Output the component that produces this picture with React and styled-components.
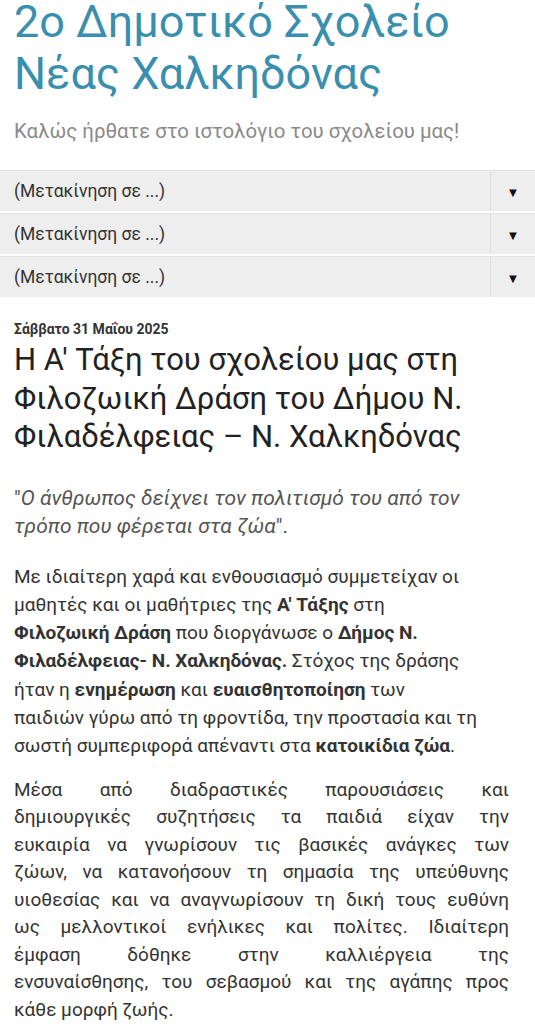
import styled, { createGlobalStyle } from "styled-components"

const GlobalStyle = createGlobalStyle`
    html, body {
        margin: 0;
        padding: 0;
        background: #ffffff;
    }
    body {
        font-family: "Roboto", "Noto Sans", "Liberation Sans", sans-serif;
        overflow: hidden;
    }
`;

const menus = ["(Μετακίνηση σε ...)", "(Μετακίνηση σε ...)", "(Μετακίνηση σε ...)"]

// lines kept as in the original post so the wrapping follows it
const intro = [
    <>Με ιδιαίτερη χαρά και ενθουσιασμό συμμετείχαν οι</>,
    <>μαθητές και οι μαθήτριες της <b>Α' Τάξης</b> στη</>,
    <><b>Φιλοζωική Δράση</b> που διοργάνωσε ο <b>Δήμος Ν.</b></>,
    <><b>Φιλαδέλφειας- Ν. Χαλκηδόνας.</b> Στόχος της δράσης</>,
    <>ήταν η <b>ενημέρωση</b> και <b>ευαισθητοποίηση</b> των</>,
    <>παιδιών γύρω από τη φροντίδα, την προστασία και τη</>,
    <>σωστή συμπεριφορά απέναντι στα <b>κατοικίδια ζώα</b>.</>,
]

const body = [
    "Μέσα από διαδραστικές παρουσιάσεις και",
    "δημιουργικές συζητήσεις τα παιδιά είχαν την",
    "ευκαιρία να γνωρίσουν τις βασικές ανάγκες των",
    "ζώων, να κατανοήσουν τη σημασία της υπεύθυνης",
    "υιοθεσίας και να αναγνωρίσουν τη δική τους ευθύνη",
    "ως μελλοντικοί ενήλικες και πολίτες. Ιδιαίτερη",
    "έμφαση δόθηκε στην καλλιέργεια της",
    "ενσυναίσθησης, του σεβασμού και της αγάπης προς",
    "κάθε μορφή ζωής.",
]

export default function App() {
    return (
        <Page>
            <GlobalStyle/>
            <Header>
                <BlogTitle>2o Δημοτικό Σχολείο Νέας Χαλκηδόνας</BlogTitle>
                <Tagline>Καλώς ήρθατε στο ιστολόγιο του σχολείου μας!</Tagline>
            </Header>

            <Menus>
                {menus.map((m, i) => (
                    <Select key={i}>
                        <SelectLabel>{m}</SelectLabel>
                        <SelectArrow>▼</SelectArrow>
                    </Select>
                ))}
            </Menus>

            <Post>
                <PostDate>Σάββατο 31 Μαΐου 2025</PostDate>
                <PostTitle>Η Α' Τάξη του σχολείου μας στη Φιλοζωική Δράση του Δήμου Ν. Φιλαδέλφειας – Ν. Χαλκηδόνας</PostTitle>

                <Quote>"<i>Ο άνθρωπος δείχνει τον πολιτισμό του από τον τρόπο που φέρεται στα ζώα</i>".</Quote>

                <Para $gap={23} $lh={28.3}>
                    {intro.map((l, i) => <Line key={i}>{l}</Line>)}
                </Para>

                <Para $gap={15} $lh={27.5}>
                    {body.map((l, i) => (
                        <Line key={i} $justify={i < body.length - 1}>{l}</Line>
                    ))}
                </Para>
            </Post>
        </Page>
    )
}

const Page = styled.div`
    width: 535px;
    display: flex;
    flex-direction: column;
`;

const Header = styled.div`
    display: flex;
    flex-direction: column;
    padding: 0 20px 0 14px;
    margin-top: -4px;
`;

const BlogTitle = styled.h1`
    margin: 0;
    font-family: "Roboto", "Noto Sans", sans-serif;
    font-weight: 400;
    font-size: 45px;
    line-height: 52px;
    color: #3b8fae;
`;

const Tagline = styled.div`
    margin-top: 19px;
    font-size: 20.4px;
    line-height: 24px;
    color: #8a8a8a;
`;

const Menus = styled.div`
    display: flex;
    flex-direction: column;
    gap: 2px;
    margin-top: 27px;
`;

const Select = styled.div`
    display: flex;
    height: 40px;
    background: #eeeeee;
    border-top: 1px solid #e2e2e2;
    font-family: "Roboto", "Noto Sans", sans-serif;
`;

const SelectLabel = styled.div`
    flex: 1;
    display: flex;
    align-items: center;
    padding-left: 14px;
    font-size: 17.5px;
    color: #333333;
`;

const SelectArrow = styled.div`
    width: 44px;
    display: flex;
    align-items: center;
    justify-content: center;
    border-left: 1px solid #dddddd;
    font-size: 13px;
    color: #111111;
    padding-top: 3px;
`;

const Post = styled.div`
    display: flex;
    flex-direction: column;
    padding: 0 26px 0 14px;
    margin-top: 23px;
`;

const PostDate = styled.div`
    font-size: 14px;
    font-weight: 700;
    line-height: 18px;
    color: #333333;
`;

const PostTitle = styled.h2`
    margin: 3px 0 0;
    font-weight: 400;
    font-size: 31px;
    line-height: 38.5px;
    color: #222222;
`;

const Quote = styled.p`
    margin: 27px 0 0;
    font-size: 21px;
    line-height: 28px;
    color: #555555;
`;

const Para = styled.div`
    display: flex;
    flex-direction: column;
    margin-top: ${props => props.$gap}px;
    font-size: 19px;
    line-height: ${props => props.$lh}px;
    color: #333333;
`;

const Line = styled.span`
    display: block;
    white-space: nowrap;
    text-align: ${props => props.$justify ? "justify" : "left"};
    text-align-last: ${props => props.$justify ? "justify" : "auto"};
`;
